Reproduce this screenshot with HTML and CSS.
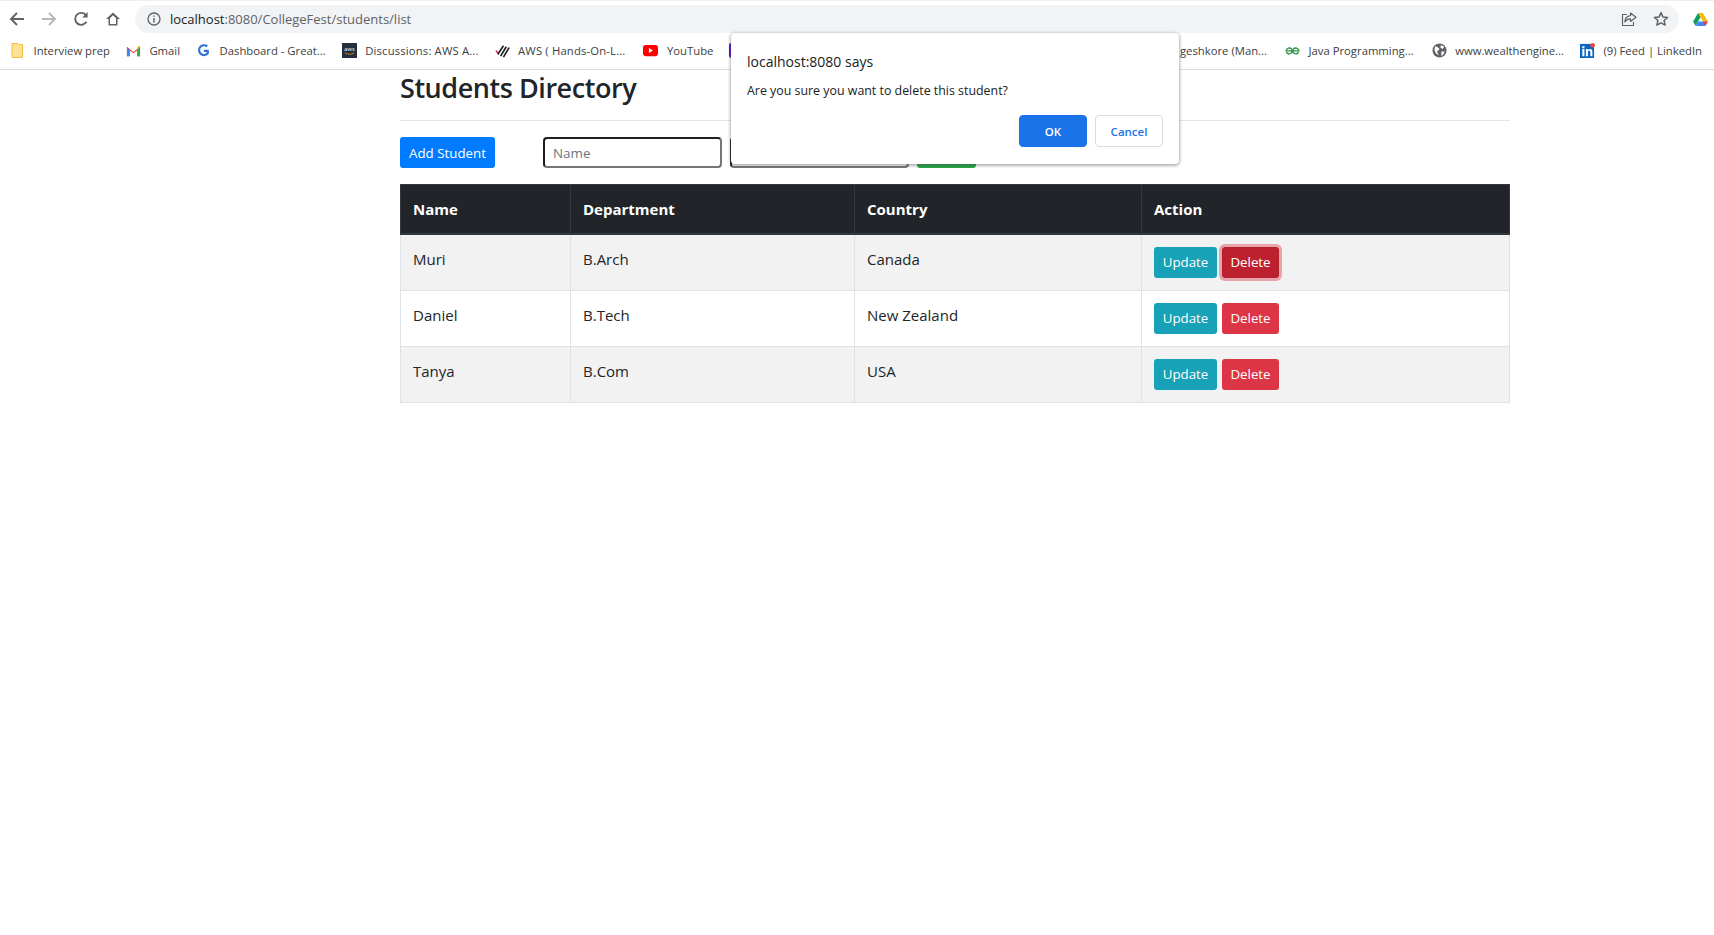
FILE: index.html
```html
<!DOCTYPE html>
<html lang="en">
<head>
   <meta charset="UTF-8">
   <title>Students Directory</title>
   <link rel="stylesheet" href="styles.css">
</head>
<body>
   <header class="chrome">
      <div class="toolbar_row">
         <div class="nav_icons">
            <svg class="nav_icon" viewBox="0 0 16 16"><path d="M15 8H2M8 2 2 8l6 6" fill="none" stroke="#5f6368" stroke-width="1.9"/></svg>
            <svg class="nav_icon" viewBox="0 0 16 16"><path d="M1 8h13M8 2l6 6-6 6" fill="none" stroke="#b4b7bb" stroke-width="1.9"/></svg>
            <svg class="nav_icon" viewBox="0 0 16 16"><path d="M13.4 10.8A6 6 0 1 1 13 4.300" fill="none" stroke="#5f6368" stroke-width="1.9"/><path d="M14.600 1v5.400H9.200z" fill="#5f6368"/></svg>
            <svg class="nav_icon" viewBox="0 0 16 16"><path d="M8 1.500 1 8h2.500v6.500h9V8H15zM5 13V7.300l3-3 3 3V13z" fill="#5f6368" fill-rule="evenodd"/></svg>
         </div>
         <div class="address_bar">
            <svg class="info_icon" viewBox="0 0 14 14"><circle cx="7" cy="7" r="6" fill="none" stroke="#5f6368" stroke-width="1.3"/><path d="M6.300 6h1.400v4.400H6.300zM6.300 3.400h1.400v1.400H6.300z" fill="#5f6368"/></svg>
            <span class="url"><b class="host">localhost</b>:8080/CollegeFest/students/list</span>
            <svg class="bar_icon share" viewBox="0 0 16 16"><path d="M6 3.500H1.500v11h11V11" fill="none" stroke="#5f6368" stroke-width="1.200"/><path d="M9.500 2v2.600C6 5 4 7.400 3.800 11c1.400-2.200 3.200-3.100 5.700-3.100v2.600L15 6.200z" fill="none" stroke="#5f6368" stroke-width="1.200" stroke-linejoin="round"/></svg>
            <svg class="bar_icon" viewBox="0 0 16 16"><path d="m8 1.600 1.900 4.300 4.700.5-3.500 3.100 1 4.600L8 11.800l-4.100 2.300 1-4.600-3.500-3.100 4.700-.5z" fill="none" stroke="#5f6368" stroke-width="1.500" stroke-linejoin="round"/></svg>
         </div>
         <svg class="drive_icon" viewBox="0 0 16 14">
            <path d="M5.400 0h5.200l5.200 9H10.600z" fill="#fbbc04"/>
            <path d="M5.400 0 0 9.200l2.600 4.600L8 4.600z" fill="#0f9d58"/>
            <path d="M2.600 14h10.700l2.600-4.800H5.300z" fill="#4285f4"/>
            <path d="m13.300 14 2.600-4.800h-5.200z" fill="#ea4335"/>
         </svg>
      </div>
      <div class="bookmarks">
         <div class="bookmark_group">
            <a class="bookmark">
               <svg class="bm_icon" viewBox="0 0 15 15"><path d="M2 .5h6l1 1h3.500v13H2z" fill="#fde293" stroke="#f2bd42"/></svg>
               <span>Interview prep</span>
            </a>
            <a class="bookmark">
               <svg class="bm_icon" viewBox="0 0 16 14"><path d="M1 13V3l7 5.500L15 3v10h-3V7L8 10 4 7v6z" fill="#ea4335"/><path d="M1 13h3V7L1 3z" fill="#4285f4"/><path d="M12 13h3V3l-3 3z" fill="#34a853"/><path d="M15 1.600V3l-3 3V3.600z" fill="#fbbc04"/></svg>
               <span>Gmail</span>
            </a>
            <a class="bookmark">
               <svg class="bm_icon" viewBox="0 0 14 14"><path d="M10.500 3.200A4.600 4.600 0 1 0 11 9.600V7.300H7.400" fill="none" stroke="#2f6fd6" stroke-width="2"/></svg>
               <span>Dashboard - Great...</span>
            </a>
            <a class="bookmark bookmark_wide">
               <svg class="bm_icon" viewBox="0 0 16 16"><rect width="16" height="16" fill="#232f3e"/><text class="aws_mark" x="8" y="8.500">aws</text><path d="M3 10.500c3 2 7 2 10 0" fill="none" stroke="#f90" stroke-width=".8"/></svg>
               <span>Discussions: AWS A...</span>
            </a>
            <a class="bookmark bookmark_wide">
               <svg class="bm_icon" viewBox="0 0 16 16"><path d="M1 8l3 4" stroke="#e5336b" stroke-width="1.600"/><path d="M3 12 9 3M6 14l6-10M9 15l6-10" stroke="#222" stroke-width="1.800"/></svg>
               <span>AWS ( Hands-On-L...</span>
            </a>
            <a class="bookmark bookmark_yt">
               <svg class="bm_icon" viewBox="0 0 16 12"><rect width="16" height="12" rx="3" fill="#f00"/><path d="m6.300 3.400 4.400 2.600-4.400 2.600z" fill="#fff"/></svg>
               <span>YouTube</span>
            </a>
            <a class="bookmark">
               <svg class="bm_icon" viewBox="0 0 14 14"><rect width="14" height="14" rx="2" fill="#5a12c9"/></svg>
            </a>
         </div>
         <div class="bookmark_group">
            <a class="bookmark bookmark_spaced">
               <span>geshkore (Man...</span>
            </a>
            <a class="bookmark bookmark_spaced">
               <svg class="bm_icon" viewBox="0 0 16 10"><g fill="none" stroke="#2f8d46" stroke-width="1.400"><path d="M8 5.400H1.200a3.400 3.400 0 0 1 6-1.800C8.400 5.300 8 7 6 8.200 4.700 9 2.500 8.600 1.500 6.800"/><path d="M8 5.400h6.800a3.400 3.400 0 0 0-6-1.800C7.600 5.300 8 7 10 8.200c1.300.8 3.500.4 4.500-1.400"/></g></svg>
               <span>Java Programming...</span>
            </a>
            <a class="bookmark">
               <svg class="bm_icon" viewBox="0 0 16 16"><circle cx="8" cy="8" r="7.500" fill="#5f6368"/><path d="M3.500 3.500 7 5l1 2-2.500 1.500L6 11l1.500 2-3-1.500-2-4zM9.500 2l3.500 2-1.500 2.500L9 5zM10 9h3.500l-2 4-1.500.5z" fill="#fff"/></svg>
               <span>www.wealthengine...</span>
            </a>
            <a class="bookmark">
               <svg class="bm_icon" viewBox="0 0 16 16"><rect y="1" width="15" height="15" fill="#0a66c2"/><path d="M2.500 6.500h2.200V14H2.500zM2.400 3.500h2.400v2H2.400zM6.300 6.500h2.100v1c.6-.8 1.300-1.200 2.300-1.200 1.800 0 2.500 1.200 2.500 3V14H11V9.800c0-1-.3-1.600-1.200-1.600s-1.300.7-1.300 1.600V14H6.300z" fill="#fff"/><circle cx="13.500" cy="2.500" r="2.500" fill="#f0483e"/></svg>
               <span>(9) Feed | LinkedIn</span>
            </a>
         </div>
      </div>
   </header>

   <div class="alert_box">
      <div class="alert_title">localhost:8080 says</div>
      <div class="alert_msg">Are you sure you want to delete this student?</div>
      <div class="alert_btns">
         <button class="alert_ok">OK</button>
         <button class="alert_cancel">Cancel</button>
      </div>
   </div>

   <main class="container">
      <h2 class="page_title">Students Directory</h2>
      <hr class="rule">

      <div class="actions_row">
         <button class="btn btn_primary">Add Student</button>
         <form class="search_form">
            <input class="search_input" placeholder="Name">
            <input class="search_input">
            <button type="button" class="btn btn_success"></button>
         </form>
      </div>

      <table class="students">
         <thead>
            <tr>
               <th class="col_name">Name</th>
               <th class="col_dept">Department</th>
               <th class="col_country">Country</th>
               <th>Action</th>
            </tr>
         </thead>
         <tbody>
            <tr>
               <td>Muri</td>
               <td>B.Arch</td>
               <td>Canada</td>
               <td><div class="row_btns"><button class="btn btn_info">Update</button><button class="btn btn_danger btn_focus">Delete</button></div></td>
            </tr>
            <tr>
               <td>Daniel</td>
               <td>B.Tech</td>
               <td>New Zealand</td>
               <td><div class="row_btns"><button class="btn btn_info">Update</button><button class="btn btn_danger">Delete</button></div></td>
            </tr>
            <tr>
               <td>Tanya</td>
               <td>B.Com</td>
               <td>USA</td>
               <td><div class="row_btns"><button class="btn btn_info">Update</button><button class="btn btn_danger">Delete</button></div></td>
            </tr>
         </tbody>
      </table>
   </main>
</body>
</html>
```

FILE: styles.css
```css
*{
    box-sizing: border-box;
}

body{
    margin: 0;
    background: white;
    color: #212529;
    font-family: "Open Sans", "Noto Sans", sans-serif;
    font-size: 15px;
}

/* browser bar */
.chrome{
    height: 70px;
    border-top: 1px solid #eceef0;
    border-bottom: 1px solid #dadce0;
}

.toolbar_row{
    display: flex;
    align-items: center;
    height: 32px;
    padding: 4px 6px 0 9px;
}

.nav_icons{
    display: flex;
    gap: 16px;
    width: 126px;
}

.nav_icon{
    width: 16px;
    height: 16px;
}

.address_bar{
    flex: 1;
    display: flex;
    align-items: center;
    height: 28px;
    padding: 0 10px 0 12px;
    border-radius: 14px;
    background: #f1f3f4;
}

.info_icon{
    width: 14px;
    height: 14px;
    margin-right: 9px;
}

.url{
    flex: 1;
    color: #5f6368;
    font-size: 13px;
}

.host{
    color: #202124;
    font-weight: normal;
}

.bar_icon{
    width: 16px;
    height: 16px;
    margin-left: 16px;
}

.drive_icon{
    width: 15px;
    height: 13px;
    margin-left: 14px;
}

.bookmarks{
    display: flex;
    justify-content: space-between;
    align-items: center;
    height: 36px;
    padding: 0 12px 2px 10px;
    color: #3c4043;
    font-size: 11.3px;
}

.bookmark_group{
    display: flex;
    gap: 16px;
}

.bookmark{
    display: flex;
    align-items: center;
    gap: 8.5px;
    white-space: nowrap;
}

.bookmark_wide{
    letter-spacing: .15px;
}

.bookmark_yt{
    margin-left: 2px;
}

.bookmark_spaced{
    margin-right: 2px;
}

.bm_icon{
    width: 15px;
    height: 15px;
}

.aws_mark{
    fill: white;
    font-size: 6px;
    text-anchor: middle;
}

/* alert */
.alert_box{
    position: absolute;
    top: 33px;
    left: 731px;
    width: 448px;
    height: 131px;
    padding: 19px 16px 16px;
    background: white;
    border-radius: 4px;
    box-shadow: 0 1px 3px 1px rgba(60, 64, 67, .4);
}

.alert_title{
    font-size: 14px;
    line-height: 20px;
    color: #202124;
}

.alert_msg{
    margin-top: 9px;
    font-size: 12.4px;
    line-height: 20px;
    color: #202124;
}

.alert_btns{
    display: flex;
    justify-content: flex-end;
    gap: 8px;
    margin-top: 14px;
}

.alert_btns button{
    width: 68px;
    height: 32px;
    border-radius: 4px;
    font-family: inherit;
    font-size: 11.5px;
    font-weight: 600;
}

.alert_ok{
    background: #1a73e8;
    border: 1px solid #1a73e8;
    color: white;
}

.alert_cancel{
    background: white;
    border: 1px solid #dadce0;
    color: #1a73e8;
}

/* page */
.container{
    width: 1110px;
    margin-left: 400px;
}

.page_title{
    margin: 0;
    font-size: 27px;
    line-height: 36px;
    font-weight: 600;
    letter-spacing: -.45px;
}

.rule{
    margin: 14px 0 16px;
    border: 0;
    border-top: 1px solid rgba(0, 0, 0, .1);
}

.actions_row{
    display: flex;
    margin-bottom: 16px;
}

.search_form{
    display: flex;
    gap: 8px;
    margin-left: 48px;
}

.search_input{
    width: 179px;
    height: 31px;
    padding: 0 8px;
    border: 2px solid;
    border-color: #1f1f1f #767676 #767676 #1f1f1f;
    border-radius: 4px;
    font-family: inherit;
    font-size: 13.4px;
}

.search_input::placeholder{
    color: #6c757d;
}

.btn{
    height: 31px;
    padding: 0 6px;
    border: 1px solid transparent;
    border-radius: 3px;
    color: white;
    font-family: inherit;
    font-size: 13.3px;
}

.btn_primary{
    width: 95px;
    background: #007bff;
}

.btn_success{
    width: 59px;
    background: #28a745;
}

.btn_info{
    width: 63px;
    background: #17a2b8;
}

.btn_danger{
    width: 57px;
    background: #dc3545;
}

.btn_focus{
    background: #bd2130;
    border-color: #b21f2d;
    box-shadow: 0 0 0 3px rgba(225, 83, 97, .5);
}

.students{
    width: 100%;
    border-collapse: collapse;
    table-layout: fixed;
}

.students th{
    height: 49px;
    padding: 12px;
    text-align: left;
    background: #212529;
    color: white;
    font-size: 15px;
    border: 1px solid #32383e;
    border-bottom-width: 2px;
}

.students td{
    height: 56px;
    padding: 12px;
    vertical-align: top;
    line-height: 24px;
    border: 1px solid #dee2e6;
}

.students tbody tr:nth-child(odd){
    background: #f2f2f2;
}

.col_name{
    width: 170px;
}

.col_dept{
    width: 284px;
}

.col_country{
    width: 287px;
}

.row_btns{
    display: flex;
    gap: 5px;
}
```
